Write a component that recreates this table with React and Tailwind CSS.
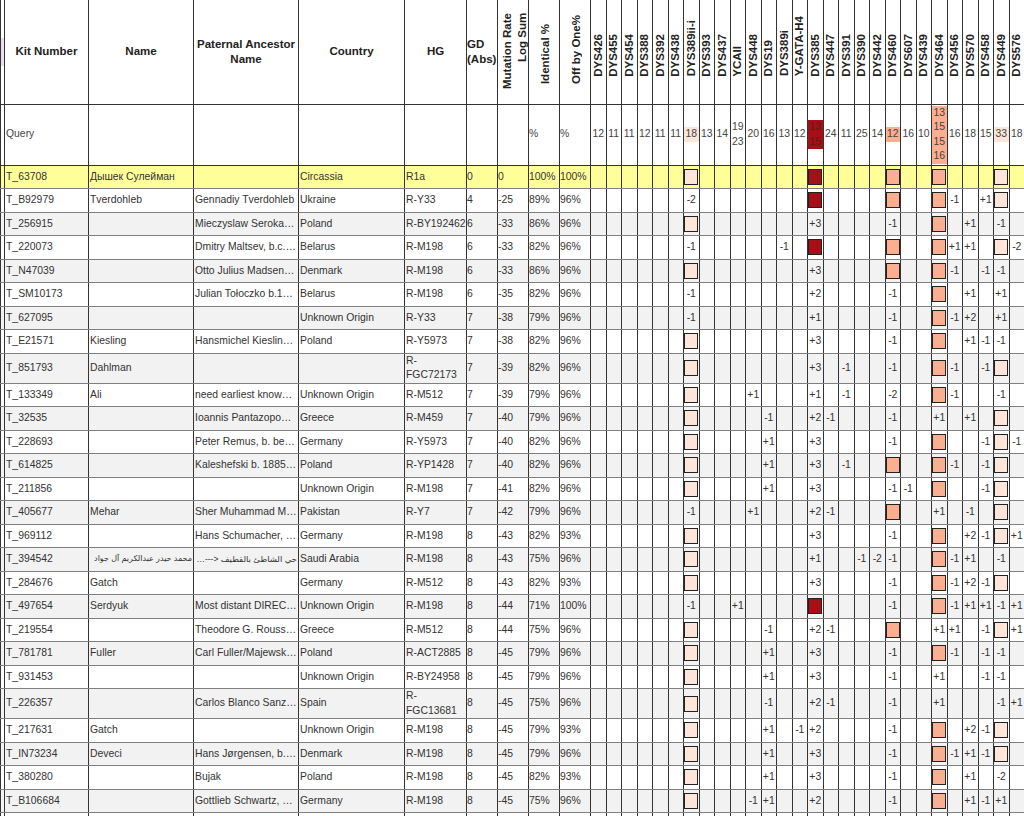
import React from 'react';

const DYS = ['DYS426','DYS455','DYS454','DYS388','DYS392','DYS438','DYS389ii-i','DYS393','DYS437','YCAII','DYS448','DYS19','DYS389i','Y-GATA-H4','DYS385','DYS447','DYS391','DYS390','DYS442','DYS460','DYS607','DYS439','DYS464','DYS456','DYS570','DYS458','DYS449','DYS576'];

const boxColors = {
  6: 'bg-[#fee5d9]',
  14: 'bg-[#a50f15]',
  19: 'bg-[#fcae91]',
  22: 'bg-[#fcae91]',
  26: 'bg-[#fee5d9]',
};

const qColors = {
  light: 'bg-[#fee5d9]',
  dark: 'bg-[#a50f15] text-[#5a1a1a]',
  salmon: 'bg-[#fcae91]',
};

const query = ['12','11','11','12','11','11',{v:['18'],c:'light'},'13','14',['19','23'],'20','16','13','12',{v:['13','15'],c:'dark'},'24','11','25','14',{v:['12'],c:'salmon'},'16','10',{v:['13','15','15','16'],c:'salmon'},'16','18','15',{v:['33'],c:'light'},'18'];

const top = ['T_63708','Дышек Сулейман','','Circassia','R1a','0','0','100%','100%',{6:'b',14:'b',19:'b',22:'b',26:'b'}];

const rows = [
  ['T_B92979','Tverdohleb','Gennadiy Tverdohleb','Ukraine','R-Y33','4','-25','89%','96%',{6:'-2',14:'b',19:'b',22:'b',23:'-1',25:'+1',26:'b'}],
  ['T_256915','','Mieczyslaw Seroka,…','Poland','R-BY192462','6','-33','86%','96%',{6:'b',14:'+3',19:'-1',22:'b',24:'+1',26:'-1'}],
  ['T_220073','','Dmitry Maltsev, b.c.…','Belarus','R-M198','6','-33','82%','96%',{6:'-1',12:'-1',14:'b',19:'b',22:'b',23:'+1',24:'+1',26:'b',27:'-2'}],
  ['T_N47039','','Otto Julius Madsen …','Denmark','R-M198','6','-33','86%','96%',{6:'b',14:'+3',19:'b',22:'b',23:'-1',25:'-1',26:'-1'}],
  ['T_SM10173','','Julian Tołoczko b.18…','Belarus','R-M198','6','-35','82%','96%',{6:'-1',14:'+2',19:'-1',22:'b',24:'+1',26:'+1'}],
  ['T_627095','','','Unknown Origin','R-Y33','7','-38','79%','96%',{6:'-1',14:'+1',19:'-1',22:'b',23:'-1',24:'+2',26:'+1'}],
  ['T_E21571','Kiesling','Hansmichel Kieslin…','Poland','R-Y5973','7','-38','82%','96%',{6:'b',14:'+3',19:'-1',22:'b',24:'+1',25:'-1',26:'-1'}],
  ['T_851793','Dahlman','','',['R-','FGC72173'],'7','-39','82%','96%',{6:'b',14:'+3',16:'-1',19:'-1',22:'b',23:'-1',25:'-1',26:'b'}],
  ['T_133349','Ali','need earliest known…','Unknown Origin','R-M512','7','-39','79%','96%',{6:'b',10:'+1',14:'+1',16:'-1',19:'-2',22:'b',23:'-1',26:'-1'}],
  ['T_32535','','Ioannis Pantazopou…','Greece','R-M459','7','-40','79%','96%',{6:'b',11:'-1',14:'+2',15:'-1',19:'-1',22:'+1',24:'+1',26:'b'}],
  ['T_228693','','Peter Remus, b. bef…','Germany','R-Y5973','7','-40','82%','96%',{6:'b',11:'+1',14:'+3',19:'-1',22:'b',25:'-1',26:'b',27:'-1'}],
  ['T_614825','','Kaleshefski b. 1885…','Poland','R-YP1428','7','-40','82%','96%',{6:'b',11:'+1',14:'+3',16:'-1',19:'b',22:'b',23:'-1',25:'-1',26:'b'}],
  ['T_211856','','','Unknown Origin','R-M198','7','-41','82%','96%',{6:'b',11:'+1',14:'+3',19:'-1',20:'-1',22:'b',25:'-1',26:'b'}],
  ['T_405677','Mehar','Sher Muhammad M…','Pakistan','R-Y7','7','-42','79%','96%',{6:'-1',10:'+1',14:'+2',15:'-1',19:'b',22:'+1',24:'-1',26:'b'}],
  ['T_969112','','Hans Schumacher, …','Germany','R-M198','8','-43','82%','93%',{6:'b',14:'+3',19:'-1',22:'b',24:'+2',25:'-1',26:'b',27:'+1'}],
  ['T_394542','محمد حيدر عبدالكريم آل جواد','حي الشاطئ بالقطيف <---- محمد','Saudi Arabia','R-M198','8','-43','75%','96%',{6:'b',14:'+1',17:'-1',18:'-2',19:'-1',22:'b',23:'-1',24:'+1',26:'-1'},true],
  ['T_284676','Gatch','','Germany','R-M512','8','-43','82%','93%',{6:'b',14:'+3',19:'-1',22:'b',23:'-1',24:'+2',25:'-1',26:'b'}],
  ['T_497654','Serdyuk','Most distant DIREC…','Unknown Origin','R-M198','8','-44','71%','100%',{6:'-1',9:'+1',14:'b',19:'-1',22:'b',23:'-1',24:'+1',25:'+1',26:'-1',27:'+1'}],
  ['T_219554','','Theodore G. Rouss…','Greece','R-M512','8','-44','75%','96%',{6:'b',11:'-1',14:'+2',15:'-1',19:'b',22:'+1',23:'+1',25:'-1',26:'b',27:'+1'}],
  ['T_781781','Fuller','Carl Fuller/Majewsk…','Poland','R-ACT2885','8','-45','79%','96%',{6:'b',11:'+1',14:'+3',19:'-1',22:'b',23:'-1',25:'-1',26:'-1'}],
  ['T_931453','','','Unknown Origin','R-BY24958','8','-45','79%','96%',{6:'b',11:'+1',14:'+3',19:'-1',22:'+1',25:'-1',26:'-1'}],
  ['T_226357','','Carlos Blanco Sanz…','Spain',['R-','FGC13681'],'8','-45','75%','96%',{6:'b',11:'-1',14:'+2',15:'-1',19:'-1',22:'+1',26:'-1',27:'+1'}],
  ['T_217631','Gatch','','Unknown Origin','R-M198','8','-45','79%','93%',{6:'b',11:'+1',13:'-1',14:'+2',19:'-1',22:'b',24:'+2',25:'-1',26:'b'}],
  ['T_IN73234','Deveci','Hans Jørgensen, b.…','Denmark','R-M198','8','-45','79%','96%',{6:'b',11:'+1',14:'+3',19:'-1',22:'b',23:'-1',24:'+1',25:'-1',26:'b'}],
  ['T_380280','','Bujak','Poland','R-M198','8','-45','82%','93%',{6:'b',11:'+1',14:'+3',19:'-1',22:'b',24:'+1',26:'-2'}],
  ['T_B106684','','Gottlieb Schwartz, …','Germany','R-M198','8','-45','75%','96%',{6:'b',10:'-1',11:'+1',14:'+2',19:'-1',22:'b',24:'+1',25:'-1',26:'+1'}],
  ['T_570118','','','Unknown Origin','R-M198','8','-45','75%','96%',{6:'b',14:'+3',19:'-1',22:'b'}],
];

const hbase = 'border-x border-b border-[#333] font-bold text-[11.5px] leading-[15px] text-[#222]';
const qcell = 'border-x border-b border-[#333] align-middle';
const dcell = 'border-x border-b border-[#333] border-b-[#808080] align-middle';

function Box({ col }) {
  return <div className={`mx-auto h-[16px] w-[14px] border border-[#222] ${boxColors[col]}`} />;
}

// rotated header label; its first letter sits `pad` above the header's bottom line
function Rotated({ children, pad, extra = '', end = false }) {
  return (
    <div className={`flex h-[103px] flex-col items-center justify-end ${pad} ${extra}`}>
      <div className={`h-max rotate-180 whitespace-nowrap [writing-mode:vertical-rl] ${end ? 'text-end' : ''}`}>{children}</div>
    </div>
  );
}

function QueryCell({ v }) {
  if (typeof v === 'string') return v;
  if (Array.isArray(v)) return v.map((t, k) => <div key={k}>{t}</div>);
  return (
    <div className={qColors[v.c]}>
      {v.v.map((t, k) => <div key={k}>{t}</div>)}
    </div>
  );
}

function Row({ r, bg }) {
  const dys = r[9];
  const rtl = r[10];
  return (
    <tr className={`h-[23.5px] ${bg}`}>
      <td className={dcell} />
      <td className={`${dcell} truncate px-px`}>{r[0]}</td>
      {rtl ? (
        <>
          <td className={`${dcell} overflow-hidden whitespace-nowrap px-px text-[8px]`} dir="rtl">{r[1]}</td>
          <td className={`${dcell} truncate px-px text-[8.5px]`} dir="rtl">{r[2]}</td>
        </>
      ) : (
        <>
          <td className={`${dcell} truncate px-px`}>{r[1]}</td>
          <td className={`${dcell} truncate px-px`}>{r[2]}</td>
        </>
      )}
      <td className={`${dcell} truncate px-px`}>{r[3]}</td>
      <td className={`${dcell} overflow-hidden px-px whitespace-nowrap`}>
        {Array.isArray(r[4]) ? <>{r[4][0]}<br />{r[4][1]}</> : r[4]}
      </td>
      <td className={`${dcell} overflow-hidden whitespace-nowrap pl-0`}>{r[5]}</td>
      <td className={`${dcell} overflow-hidden whitespace-nowrap pl-0`}>{r[6]}</td>
      <td className={`${dcell} overflow-hidden whitespace-nowrap pl-0`}>{r[7]}</td>
      <td className={`${dcell} overflow-hidden whitespace-nowrap pl-0`}>{r[8]}</td>
      {DYS.map((d, c) => (
        <td key={d} className={`${dcell} p-0 text-center whitespace-nowrap`}>
          {dys[c] === 'b' ? <Box col={c} /> : dys[c] || ''}
        </td>
      ))}
    </tr>
  );
}

export default function App() {
  return (
    <div className="h-[816px] w-[1024px] overflow-hidden bg-white font-['Liberation_Sans','DejaVu_Sans',sans-serif] text-[10.4px] leading-[14.5px] text-[#333]">
      <table className="w-[1024px] table-fixed border-collapse">
        <colgroup>
          <col className="w-[4px]" />
          <col className="w-[84px]" />
          <col className="w-[105px]" />
          <col className="w-[105px]" />
          <col className="w-[106px]" />
          <col className="w-[62px]" />
          <col className="w-[31px]" />
          <col className="w-[31px]" />
          <col className="w-[31px]" />
          <col className="w-[31px]" />
          {DYS.map((d) => <col key={d} className="w-[15.5px]" />)}
        </colgroup>
        <thead>
          <tr className="h-[104px]">
            <th className={`${hbase} align-middle`}>
              <div className="h-[28px] w-[3px] bg-[#eadff0]" />
            </th>
            <th className={`${hbase} align-middle text-center`}>Kit Number</th>
            <th className={`${hbase} align-middle text-center`}>Name</th>
            <th className={`${hbase} align-middle text-center`}>Paternal Ancestor<br />Name</th>
            <th className={`${hbase} align-middle text-center`}>Country</th>
            <th className={`${hbase} align-middle text-center`}>HG</th>
            <th className={`${hbase} align-middle pl-0 text-left`}>GD<br />(Abs)</th>
            <th className={`${hbase} p-0 align-bottom`}>
              <Rotated pad="pb-[14px]" extra="pl-[3px]" end>Mutation Rate<br />Log Sum</Rotated>
            </th>
            <th className={`${hbase} p-0 align-bottom`}>
              <Rotated pad="pb-[19px]" extra="pl-[3px]">Identical %</Rotated>
            </th>
            <th className={`${hbase} p-0 align-bottom`}>
              <Rotated pad="pb-[19px]" extra="pl-[3px]">Off by One%</Rotated>
            </th>
            {DYS.map((d) => (
              <th key={d} className={`${hbase} p-0 align-bottom`}>
                <Rotated pad="pb-[27px]">{d}</Rotated>
              </th>
            ))}
          </tr>
        </thead>
        <tbody>
          <tr className="h-[61px] text-[#444]">
            <td className={qcell} />
            <td className={`${qcell} px-px`}>Query</td>
            <td className={qcell} />
            <td className={qcell} />
            <td className={qcell} />
            <td className={qcell} />
            <td className={qcell} />
            <td className={qcell} />
            <td className={`${qcell} pl-0`}>%</td>
            <td className={`${qcell} pl-0`}>%</td>
            {query.map((v, c) => (
              <td key={c} className={`${qcell} p-0 text-center`}>
                <QueryCell v={v} />
              </td>
            ))}
          </tr>
          <Row r={top} bg="bg-[#ffff99]" />
          {rows.map((r, i) => (
            <Row key={r[0]} r={r} bg={i % 2 ? 'bg-[#f2f2f2]' : 'bg-white'} />
          ))}
        </tbody>
      </table>
    </div>
  );
}
